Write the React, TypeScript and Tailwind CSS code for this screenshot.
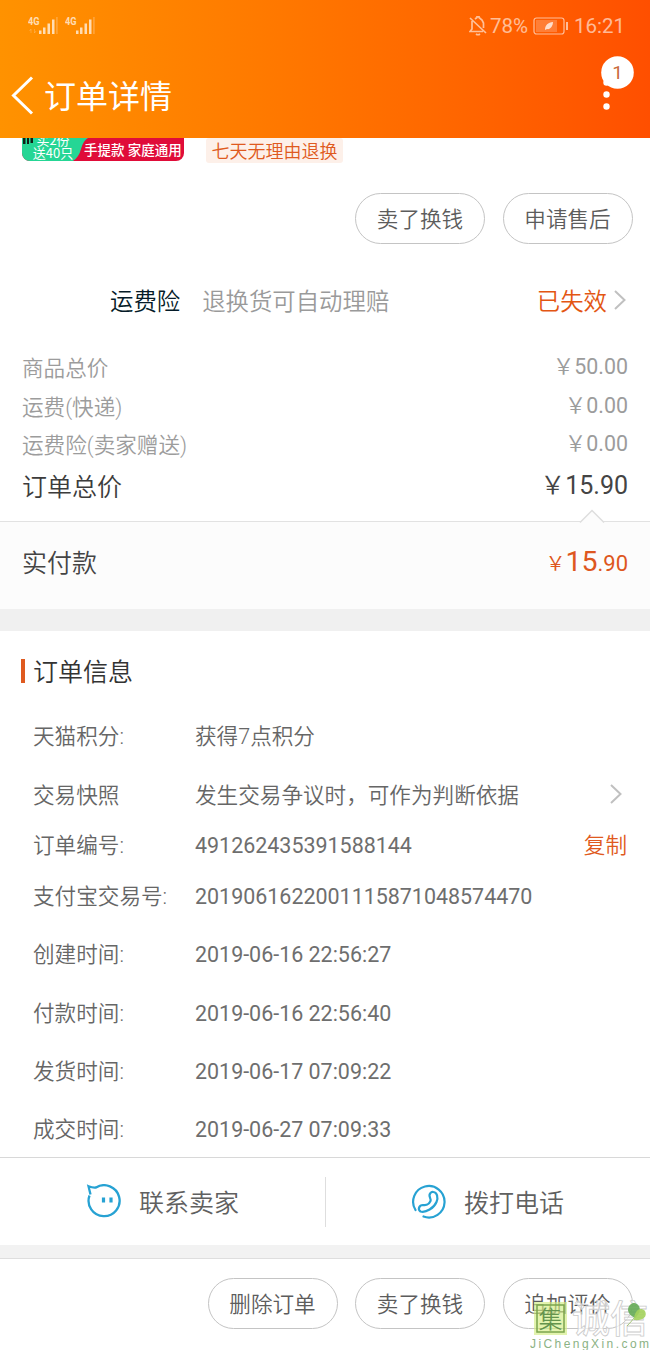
import type { ReactNode } from "react";

function Signal({ arrows }: { arrows?: boolean }) {
  return (
    <svg width="32" height="22" viewBox="0 0 32 22" fill="#ffffff" opacity="0.7">
      <text x="0" y="9.500" fontSize="10.5" fontWeight="700" fontFamily="Roboto" textLength="11.500" lengthAdjust="spacingAndGlyphs">4G</text>
      {arrows && <path d="M3 14v4M1.500 16l1.500-2M6.500 18v-4M8 16l-1.500 2" stroke="#fff" strokeWidth="0.700" fill="none" opacity="0.4" />}
      <rect x="11" y="15.500" width="2.500" height="3.500" />
      <rect x="15" y="12.500" width="2.500" height="6.500" />
      <rect x="19.500" y="8.500" width="2.500" height="10.500" />
      <rect x="24" y="4.500" width="2.500" height="14.500" />
      <rect x="28" y="2" width="1.800" height="17" opacity="0.3" />
    </svg>
  );
}

function Chevron() {
  return (
    <svg width="14" height="22" viewBox="0 0 14 22" fill="none" stroke="#c0c0c0" strokeWidth="2">
      <path d="M2 2l9.500 9L2 20" />
    </svg>
  );
}

function Pill({ children }: { children: ReactNode }) {
  return (
    <button className="flex h-[51px] w-[130px] shrink-0 items-center justify-center rounded-full border border-[#c4c4c4] pt-[2px] text-[21.6px] text-[#5c5c5c]">
      {children}
    </button>
  );
}

function PriceRow({ label, value }: { label: string; value: string }) {
  return (
    <div className="flex h-[38.500px] items-center justify-between text-[21.6px] text-[#9c9c9c]">
      <span className="pt-[4px]">{label}</span>
      <span className="flex font-normal text-[#9c9c9c]">
        <span className="font-[350]">￥</span>
        <span className="text-[21.400px]">{value}</span>
      </span>
    </div>
  );
}

function InfoRow({ label, value, height, numeric, end }: { label: string; value: string; height: string; numeric?: boolean; end?: ReactNode }) {
  return (
    <div className={`flex items-center text-[21.6px] text-[#666] ${height}`}>
      <span className="w-[162px] shrink-0">{label}</span>
      <span className={numeric ? "grow text-[21.450px] font-normal text-[#6e6e6e]" : "grow"}>{value}</span>
      {end}
    </div>
  );
}

export default function App() {
  return (
    <div className="relative flex h-[1350px] w-[650px] flex-col overflow-hidden bg-white font-['Roboto','Noto_Sans_CJK_SC',sans-serif] leading-none font-[350] whitespace-nowrap">
      <header className="flex h-[138px] shrink-0 flex-col bg-linear-to-r from-[#ff9200] to-[#ff4f00] text-white">
        <div className="flex h-[52px] items-center justify-between pr-[26px] pl-[28px]">
          <div className="flex gap-[5px]">
            <Signal arrows />
            <Signal />
          </div>
          <div className="flex items-center text-[21px] font-normal text-white/60">
            <svg width="18" height="20" viewBox="0 0 18 20" fill="none" stroke="currentColor" strokeWidth="1.700">
              <path d="M1 2l16 15M3 5v8l-2 2.500h13M6 3l2-1.500V.500h2v1l3 2.500 1.500 3v5M7 18q2 1.500 4 0" />
            </svg>
            <span className="ml-[3px] text-[20.500px]">78%</span>
            <svg className="ml-[5px]" width="36" height="18" viewBox="0 0 36 18" fill="none">
              <rect x="1" y="1" width="30" height="16" rx="2.500" stroke="currentColor" strokeWidth="1.200" />
              <rect x="3" y="3" width="21" height="12" fill="currentColor" opacity="0.35" />
              <path d="M12 13c0-5 3-7.500 8-8 0 4-3 8-6 7z" fill="#fff" opacity="0.75" />
              <path d="M34 5v8" stroke="currentColor" strokeWidth="2" />
            </svg>
            <span className="ml-[5px] -mr-px text-[20.500px]">16:21</span>
          </div>
        </div>
        <div className="flex h-[86px] items-center pl-[11px]">
          <svg width="23" height="39" viewBox="0 0 23 39" fill="none" stroke="#fff" strokeWidth="3">
            <path d="M21 1.500L2.500 19.500 21 37.500" />
          </svg>
          <h1 className="ml-[10px] pt-[3px] text-[32px] font-normal">订单详情</h1>
          <div className="relative mr-[16px] mb-[24px] ml-auto h-[54px] w-[33px]">
            <svg width="33" height="54" viewBox="0 0 33 54" fill="#fff">
              <circle cx="16.500" cy="16.500" r="16.300" />
              <circle cx="5.500" cy="26.500" r="3.200" />
              <circle cx="5.500" cy="38.500" r="3.200" />
              <circle cx="5.500" cy="50.500" r="3.200" />
            </svg>
            <span className="absolute inset-x-0 top-0 flex h-[33px] items-center justify-center text-[19px] font-normal text-[#c96a3c]">1</span>
          </div>
        </div>
      </header>

      <section className="flex h-[194px] shrink-0 flex-col">
        <div className="flex h-[55px] items-start">
          <div className="relative ml-[22px] flex h-[23px] w-[162px] overflow-hidden rounded-b-[8px] bg-[#e00c39] text-white">
            <svg className="absolute inset-0" width="162" height="23" viewBox="0 0 162 23">
              <path d="M0 0h66q-5 3-7 11t-8 12H0z" fill="#25d695" />
              <path d="M1 0h2.500v6H1zM5 0h2v6H5zM8.500 0h2.500v5H8.500z" fill="#102018" />
            </svg>
            <div className="relative -mt-[4px] w-[62px] text-center font-['Noto_Sans_CJK_SC',sans-serif] text-[13px] leading-[12.500px] font-normal">
              <div>买2份</div>
              <div>送40只</div>
            </div>
            <div className="relative pt-[6px] text-[13.500px] font-medium">手提款 家庭通用</div>
          </div>
          <span className="ml-[22px] flex h-[25px] w-[137px] items-center justify-center rounded-[3px] bg-[#fdf0e9] pt-[2px] text-[18px] text-[#df5a20]">七天无理由退换</span>
        </div>
        <div className="flex justify-end gap-[17.500px] pr-[17.500px]">
          <Pill>卖了换钱</Pill>
          <Pill>申请售后</Pill>
        </div>
        <div className="flex grow items-center pt-[27px] pr-[23px] pl-[110px] text-[23.400px]">
          <span className="pt-[3px] text-[#051b28]">运费险</span>
          <span className="ml-[22px] pt-[3px] text-[#9a9a9a]">退换货可自动理赔</span>
          <span className="mr-[6px] ml-auto pt-[3px] text-[#e35613]">已失效</span>
          <span className="pb-[3px]"><Chevron /></span>
        </div>
      </section>

      <section className="flex h-[189px] shrink-0 flex-col px-[22px] pt-[16px]">
        <PriceRow label="商品总价" value="50.00" />
        <PriceRow label="运费(快递)" value="0.00" />
        <PriceRow label="运费险(卖家赠送)" value="0.00" />
        <div className="flex h-[42px] items-center justify-between text-[25px] text-[#3c3c3c]">
          <span className="pt-[5px]">订单总价</span>
          <span className="flex pt-px font-normal text-[#444]"><span className="font-[350]">￥</span>15.90</span>
        </div>
      </section>

      <section className="relative flex h-[88px] shrink-0 items-center justify-between border-t border-[#e2e2e2] bg-[#fcfcfc] px-[22px] text-[25px] text-[#444]">
        <svg className="absolute -top-[13px] right-[45px]" width="26" height="14" viewBox="0 0 26 14">
          <path d="M1 13.500L13 1.500 25 13.500" fill="#fcfcfc" stroke="#dedede" strokeWidth="1.500" />
        </svg>
        <span className="pb-[4px]">实付款</span>
        <span className="flex items-baseline pb-[7px] font-normal text-[#de5720]">
          <span className="text-[20px] font-[350]">￥</span>
          <span className="text-[28.500px]">15</span>
          <span className="text-[22px]">.90</span>
        </span>
      </section>
      <div className="h-[22px] shrink-0 bg-[#f0f0f0]" />

      <section className="flex h-[526px] shrink-0 flex-col pr-[23px] pl-[21px]">
        <div className="flex h-[76px] shrink-0 items-center pt-[4px]">
          <span className="h-[24px] w-[4px] bg-[#df5a20]" />
          <h2 className="ml-[8px] pt-[3px] text-[25px] text-[#333]">订单信息</h2>
        </div>
        <div className="-mb-[3px] flex shrink-0 flex-col pt-px pl-[12px]">
          <InfoRow height="h-[58px]" label="天猫积分:" value="获得7点积分" />
          <InfoRow height="h-[59px]" label="交易快照" value="发生交易争议时，可作为判断依据" end={<span className="mr-[4px] pb-[4px]"><Chevron /></span>} />
          <InfoRow height="h-[42px]" numeric label="订单编号:" value="491262435391588144" end={<span className="text-[#df5a20]">复制</span>} />
          <InfoRow height="h-[59px]" numeric label="支付宝交易号:" value="2019061622001115871048574470" />
          <InfoRow height="h-[58px]" numeric label="创建时间:" value="2019-06-16 22:56:27" />
          <InfoRow height="h-[59px]" numeric label="付款时间:" value="2019-06-16 22:56:40" />
          <InfoRow height="h-[58px]" numeric label="发货时间:" value="2019-06-17 07:09:22" />
          <InfoRow height="h-[58px]" numeric label="成交时间:" value="2019-06-27 07:09:33" />
        </div>
      </section>

      <section className="flex h-[88px] shrink-0 items-center border-t border-[#d8d8d8] text-[25px] text-[#606060]">
        <div className="flex h-[50px] w-[326px] items-center border-r border-[#dedede] pl-[86px]">
          <svg width="36" height="36" viewBox="0 0 36 36" fill="none" stroke="#27a2d3" strokeWidth="2.300">
            <path d="M4.500 10.500L2.500 2.200Q7 4 10 3.500A15.500 15.500 0 1 1 3.500 11.500" />
            <path d="M17.500 13.500v5M25 13.500v5" strokeWidth="3.200" />
          </svg>
          <span className="ml-[17px] pt-[3px]">联系卖家</span>
        </div>
        <div className="flex items-center pl-[85px]">
          <svg width="36" height="36" viewBox="0 0 36 36" fill="none" stroke="#27a2d3" strokeWidth="2.200" strokeLinecap="round">
            <path d="M4.500 26A15.700 15.700 0 1 1 12.500 32.500" />
            <path d="M19.500 9C16.500 12 20.500 14 19.500 17C18 20.500 14.500 21.500 12 21C8 21 6.500 25.500 9.500 27.500C15 29 23 24 25.500 18C27.500 13 26 8.500 22.500 8Q20.500 7.500 19.500 9Z" />
          </svg>
          <span className="ml-[17px] pt-[3px]">拨打电话</span>
        </div>
      </section>
      <div className="h-[14px] shrink-0 border-b border-[#dedede] bg-[#f2f2f2]" />
      <footer className="flex grow items-start justify-end gap-[17.500px] pt-[19px] pr-[17.500px]">
        <Pill>删除订单</Pill>
        <Pill>卖了换钱</Pill>
        <Pill>追加评价</Pill>
      </footer>

      <div className="absolute top-[1300px] left-[530px] h-[50px] w-[120px]">
        <svg width="120" height="50" viewBox="0 0 120 50">
          <rect x="4" y="2" width="33" height="33" fill="#d2ec83" opacity="0.65" />
          <rect x="7" y="5" width="27" height="27" fill="none" stroke="#7ba54d" strokeWidth="1.500" />
          <text x="8.500" y="27.500" fontSize="24" fontFamily="Noto Sans CJK SC" fill="#64944d">集</text>
          <text x="42" y="32" fontSize="38" fontFamily="Noto Sans CJK SC" fontWeight="500" fill="#fff" fillOpacity="0.7" stroke="#cbcbcb" strokeWidth="0.800">诚信</text>
          <path d="M105 18c-9-4-9-12-2-15 7 0 10 8 2 15z" fill="#65ab57" opacity="0.9" />
          <path d="M104 20c0-9 6-14 11-9 3 6-3 10-11 9z" fill="#a4d35c" opacity="0.9" />
          <path d="M104 18q-3 4-7 8" stroke="#a4c579" fill="none" />
          <text x="0" y="47.500" fontSize="12" fontFamily="Liberation Sans" fill="#8bb284" textLength="119">JiChengXin.com</text>
        </svg>
      </div>
    </div>
  );
}
